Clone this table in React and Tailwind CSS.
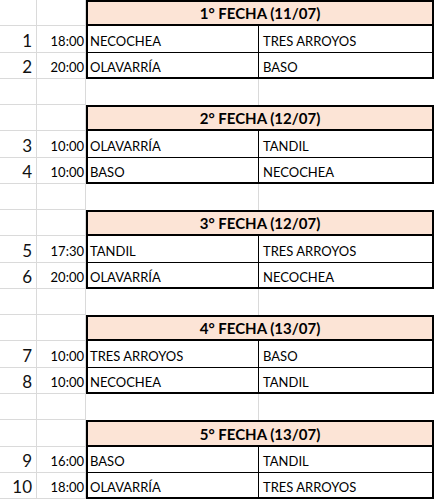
import React from "react";

const blocks = [
  { title: "1° FECHA (11/07)", rows: [["1", "18:00", "NECOCHEA", "TRES ARROYOS"], ["2", "20:00", "OLAVARRÍA", "BASO"]] },
  { title: "2° FECHA (12/07)", rows: [["3", "10:00", "OLAVARRÍA", "TANDIL"], ["4", "10:00", "BASO", "NECOCHEA"]] },
  { title: "3° FECHA (12/07)", rows: [["5", "17:30", "TANDIL", "TRES ARROYOS"], ["6", "20:00", "OLAVARRÍA", "NECOCHEA"]] },
  { title: "4° FECHA (13/07)", rows: [["7", "10:00", "TRES ARROYOS", "BASO"], ["8", "10:00", "NECOCHEA", "TANDIL"]] },
  { title: "5° FECHA (13/07)", rows: [["9", "16:00", "BASO", "TANDIL"], ["10", "18:00", "OLAVARRÍA", "TRES ARROYOS"]] },
];

const heights = [
  "h-[26px]", "h-[27px]", "h-[26px]", "h-[26px]",
  "h-[26px]", "h-[27px]", "h-[26px]", "h-[26px]",
  "h-[26px]", "h-[27px]", "h-[26px]", "h-[26px]",
  "h-[26px]", "h-[27px]", "h-[26px]", "h-[26px]",
  "h-[27px]", "h-[26px]", "h-[26px]",
];

function ColA({ children }) {
  return (
    <div className="w-[37px] shrink-0 border-r border-b border-[#dadada] flex items-end justify-end pr-[4px] pb-[1px] text-[17px] leading-[20px] text-[#111]">
      {children}
    </div>
  );
}

function ColB({ children }) {
  return (
    <div className="w-[49px] shrink-0 border-r border-b border-[#dadada] flex items-end justify-end pr-[1px] pb-[3px] text-[13px] leading-[16px] text-black">
      {children}
    </div>
  );
}

export default function App() {
  let r = 0;
  const out = [];
  blocks.forEach((b, bi) => {
    out.push(
      <div key={`h${bi}`} className={`flex ${heights[r++]}`}>
        <ColA />
        <ColB />
        <div className="w-[348px] shrink-0 border-2 border-black bg-[#fce4d6] flex items-end justify-center pb-[2px] font-bold text-[15px] leading-[17px] text-black">
          {b.title}
        </div>
      </div>
    );
    b.rows.forEach((row, ri) => {
      const last = ri === 1;
      out.push(
        <div key={`r${bi}-${ri}`} className={`flex ${heights[r++]}`}>
          <ColA>{row[0]}</ColA>
          <ColB>{row[1]}</ColB>
          <div className={`w-[173px] shrink-0 border-l-2 border-r border-black ${last ? "border-b-2" : "border-b"} flex items-end pl-[2px] ${last ? "pb-[2px]" : "pb-[3px]"} text-[13px] leading-[16px] text-black`}>
            {row[2]}
          </div>
          <div className={`w-[175px] shrink-0 border-r-2 border-black ${last ? "border-b-2" : "border-b"} flex items-end pl-[4px] ${last ? "pb-[2px]" : "pb-[3px]"} text-[13px] leading-[16px] text-black`}>
            {row[3]}
          </div>
        </div>
      );
    });
    if (bi < blocks.length - 1) {
      out.push(
        <div key={`e${bi}`} className={`flex ${heights[r++]}`}>
          <ColA />
          <ColB />
          <div className="w-[173px] shrink-0 border-r border-[#dadada]" />
          <div className="w-[175px] shrink-0" />
        </div>
      );
    }
  });
  return (
    <div className="w-[434px] h-[499px] overflow-hidden bg-white font-['Lato',sans-serif]">
      {out}
    </div>
  );
}
